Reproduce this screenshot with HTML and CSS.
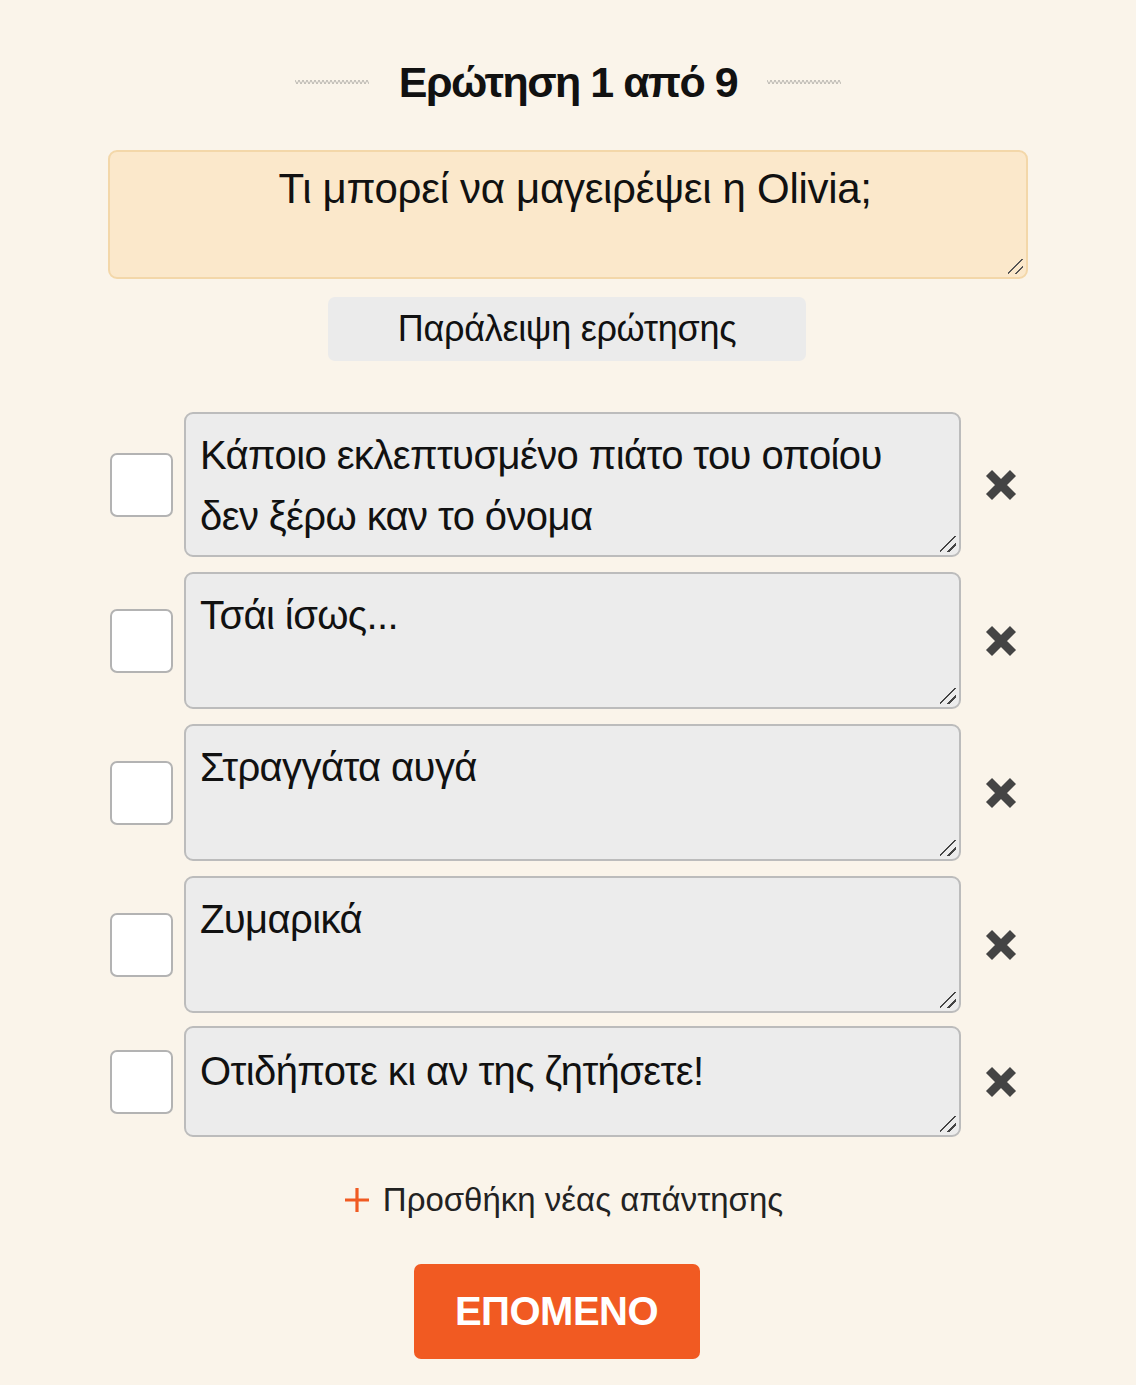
FILE: index.html
```html
<!DOCTYPE html>
<html lang="el">
<head>
<meta charset="utf-8">
<title>Ερώτηση 1 από 9</title>
<link rel="stylesheet" href="styles.css">
</head>
<body>
<main class="quiz">
  <header class="title-row">
    <svg class="wave" viewBox="0 0 74 6" width="74" height="6"><polyline points="0,1 2,5 4,1 6,5 8,1 10,5 12,1 14,5 16,1 18,5 20,1 22,5 24,1 26,5 28,1 30,5 32,1 34,5 36,1 38,5 40,1 42,5 44,1 46,5 48,1 50,5 52,1 54,5 56,1 58,5 60,1 62,5 64,1 66,5 68,1 70,5 72,1 74,5" fill="none" stroke="#b9b6b0" stroke-width="1"/></svg>
    <h1 class="title">Ερώτηση 1 από 9</h1>
    <svg class="wave" viewBox="0 0 74 6" width="74" height="6"><polyline points="0,1 2,5 4,1 6,5 8,1 10,5 12,1 14,5 16,1 18,5 20,1 22,5 24,1 26,5 28,1 30,5 32,1 34,5 36,1 38,5 40,1 42,5 44,1 46,5 48,1 50,5 52,1 54,5 56,1 58,5 60,1 62,5 64,1 66,5 68,1 70,5 72,1 74,5" fill="none" stroke="#b9b6b0" stroke-width="1"/></svg>
  </header>

  <textarea class="question">Τι μπορεί να μαγειρέψει η Olivia;</textarea>

  <div class="skip-wrap"><button class="skip">Παράλειψη ερώτησης</button></div>

  <div class="answers">
    <div class="answer">
      <span class="check"></span>
      <textarea class="answer-text tall">Κάποιο εκλεπτυσμένο πιάτο του οποίου δεν ξέρω καν το όνομα</textarea>
      <svg class="remove" viewBox="0 0 32 32" width="32" height="32"><path d="M4 4 L28 28 M28 4 L4 28" stroke="#444" stroke-width="8.5" stroke-linecap="butt"/></svg>
    </div>
    <div class="answer">
      <span class="check"></span>
      <textarea class="answer-text">Τσάι ίσως...</textarea>
      <svg class="remove" viewBox="0 0 32 32" width="32" height="32"><path d="M4 4 L28 28 M28 4 L4 28" stroke="#444" stroke-width="8.5" stroke-linecap="butt"/></svg>
    </div>
    <div class="answer">
      <span class="check"></span>
      <textarea class="answer-text">Στραγγάτα αυγά</textarea>
      <svg class="remove" viewBox="0 0 32 32" width="32" height="32"><path d="M4 4 L28 28 M28 4 L4 28" stroke="#444" stroke-width="8.5" stroke-linecap="butt"/></svg>
    </div>
    <div class="answer">
      <span class="check"></span>
      <textarea class="answer-text">Ζυμαρικά</textarea>
      <svg class="remove" viewBox="0 0 32 32" width="32" height="32"><path d="M4 4 L28 28 M28 4 L4 28" stroke="#444" stroke-width="8.5" stroke-linecap="butt"/></svg>
    </div>
    <div class="answer">
      <span class="check"></span>
      <textarea class="answer-text short">Οτιδήποτε κι αν της ζητήσετε!</textarea>
      <svg class="remove" viewBox="0 0 32 32" width="32" height="32"><path d="M4 4 L28 28 M28 4 L4 28" stroke="#444" stroke-width="8.5" stroke-linecap="butt"/></svg>
    </div>
  </div>

  <div class="add-row">
    <svg class="plus" viewBox="0 0 26 26" width="26" height="26"><path d="M13 1 V25 M1 13 H25" stroke="#f05a22" stroke-width="3.2"/></svg>
    <span class="add-text">Προσθήκη νέας απάντησης</span>
  </div>

  <div class="next-wrap"><button class="next">ΕΠΟΜΕΝΟ</button></div>
</main>
</body>
</html>
```

FILE: styles.css
```css
html, body {
  margin: 0;
  padding: 0;
  background: #faf4ea;
}
body {
  font-family: "Liberation Sans", Arial, "Noto Sans", sans-serif;
  color: #111;
}
.quiz {
  width: 920px;
  margin: 0 auto;
  padding-top: 52px;
  display: flex;
  flex-direction: column;
}
.title-row {
  display: flex;
  align-items: center;
  justify-content: center;
  gap: 30px;
  height: 60px;
}
.wave { display: block; }
.title {
  margin: 0;
  font-size: 43px;
  letter-spacing: -1.5px;
  font-weight: 700;
  color: #111;
  line-height: 60px;
}
.question {
  margin-top: 38px;
  height: 129px;
  box-sizing: border-box;
  width: 100%;
  resize: none;
  background: #fbe8cb linear-gradient(135deg, transparent 45%, #555 45%, #555 53%, transparent 53%, transparent 71%, #555 71%, #555 79%, transparent 79%) no-repeat right 3px bottom 3px / 15px 15px;
  border: 2px solid #f3d7a9;
  border-radius: 9px;
  font-family: inherit;
  font-size: 42px;
  letter-spacing: -0.3px;
  text-align: center;
  padding: 13px 14px 13px 28px;
  color: #111;
  outline: none;
  overflow: hidden;
}
.skip-wrap {
  display: flex;
  justify-content: center;
  margin-top: 18px;
  padding-right: 2px;
}
.skip {
  width: 478px;
  height: 64px;
  background: #ebebeb;
  border: none;
  border-radius: 7px;
  font-family: inherit;
  font-size: 36px;
  letter-spacing: -0.3px;
  color: #111;
}
.answers {
  margin-top: 51px;
  display: flex;
  flex-direction: column;
  gap: 15px;
}
.answer {
  display: flex;
  align-items: center;
}
.check {
  width: 63px;
  height: 64px;
  box-sizing: border-box;
  margin-left: 2px;
  background: #fff;
  border: 2px solid #b3b3b3;
  border-radius: 7px;
  flex: none;
}
.answer-text {
  margin-left: 11px;
  width: 777px;
  height: 137px;
  box-sizing: border-box;
  resize: none;
  background: #ececec linear-gradient(135deg, transparent 45%, #444 45%, #444 53%, transparent 53%, transparent 71%, #444 71%, #444 79%, transparent 79%) no-repeat right 3px bottom 3px / 16px 16px;
  border: 2px solid #bcbcbc;
  border-radius: 9px;
  font-family: inherit;
  font-size: 40px;
  letter-spacing: -0.6px;
  line-height: 61px;
  padding: 11px 60px 0 14px;
  color: #111;
  outline: none;
  overflow: hidden;
  flex: none;
}
.answer-text.tall { height: 145px; }
.answer-text.short { height: 111px; padding-top: 13px; }
.answer:last-child { margin-top: -2px; }
.remove {
  margin-left: 24px;
  flex: none;
}
.add-row {
  margin-top: 44px;
  display: flex;
  align-items: center;
  justify-content: center;
  gap: 13px;
  padding-right: 9px;
}
.plus { display: block; flex: none; }
.add-text {
  font-size: 33px;
  color: #222;
}
.next-wrap {
  display: flex;
  justify-content: center;
  margin-top: 45px;
  padding-right: 23px;
}
.next {
  width: 286px;
  height: 95px;
  background: #f15a22;
  border: none;
  border-radius: 7px;
  color: #fff;
  font-family: inherit;
  font-size: 40px;
  font-weight: 700;
  letter-spacing: -0.5px;
}
```
